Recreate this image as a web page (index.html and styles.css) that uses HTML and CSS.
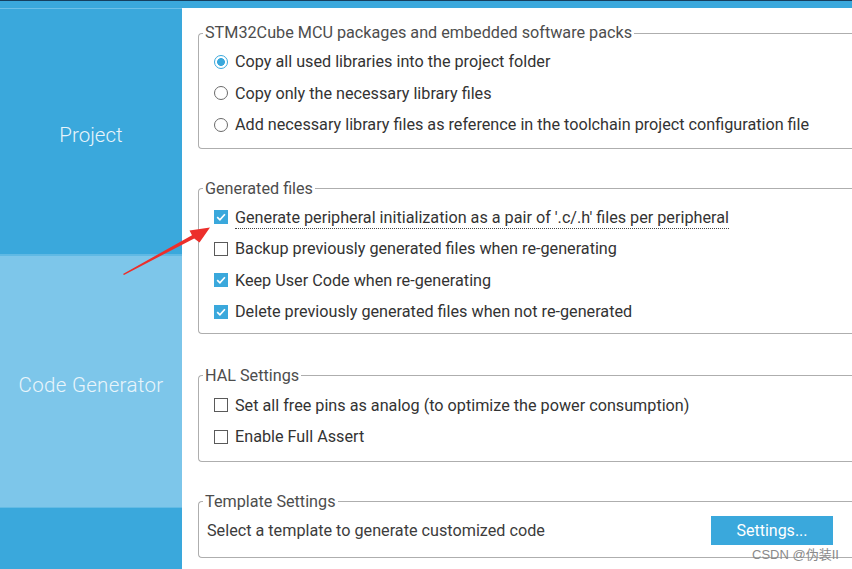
FILE: index.html
```html
<!DOCTYPE html>
<html lang="en">
<head>
<meta charset="utf-8">
<title>Project Manager</title>
<link rel="stylesheet" href="styles.css">
</head>
<body>
<div class="topbar"></div>
<div class="main">
  <nav class="sidebar">
    <div class="tab tab-project">Project</div>
    <div class="tab tab-active">Code Generator</div>
    <div class="tab tab-rest"></div>
  </nav>
  <section class="content">
    <fieldset class="group g1">
      <legend>STM32Cube MCU packages and embedded software packs</legend>
      <div class="opt"><span class="radio on"></span><span>Copy all used libraries into the project folder</span></div>
      <div class="opt"><span class="radio"></span><span>Copy only the necessary library files</span></div>
      <div class="opt"><span class="radio"></span><span>Add necessary library files as reference in the toolchain project configuration file</span></div>
    </fieldset>
    <fieldset class="group g2">
      <legend>Generated files</legend>
      <div class="opt"><span class="check on"></span><span class="focus">Generate peripheral initialization as a pair of '.c/.h' files per peripheral</span></div>
      <div class="opt"><span class="check"></span><span>Backup previously generated files when re-generating</span></div>
      <div class="opt"><span class="check on"></span><span>Keep User Code when re-generating</span></div>
      <div class="opt"><span class="check on"></span><span>Delete previously generated files when not re-generated</span></div>
    </fieldset>
    <fieldset class="group g3">
      <legend>HAL Settings</legend>
      <div class="opt"><span class="check"></span><span>Set all free pins as analog (to optimize the power consumption)</span></div>
      <div class="opt"><span class="check"></span><span>Enable Full Assert</span></div>
    </fieldset>
    <fieldset class="group g4">
      <legend>Template Settings</legend>
      <div class="tpl-row">
        <span class="tpl-text">Select a template to generate customized code</span>
        <button class="btn">Settings...</button>
      </div>
    </fieldset>
  </section>
</div>
<svg class="arrow" width="852" height="569" viewBox="0 0 852 569">
  <polygon points="123,274 192,235.2 189.5,230.5 210,227.5 199.5,242.5 194.2,238.4 124,275" fill="#ec2f2b"/>
</svg>
<div class="watermark">CSDN @伪装II</div>
</body>
</html>
```
FILE: styles.css
```css
html, body {
  margin: 0;
  padding: 0;
  width: 852px;
  height: 569px;
  overflow: hidden;
  background: #ffffff;
  font-family: Roboto, "Liberation Sans", "Noto Sans CJK SC", sans-serif;
  position: relative;
}
.topbar {
  height: 8px;
  background: #3aa8dc;
  border-top: 1px solid #163f5e;
  box-sizing: border-box;
}
.main {
  display: flex;
  height: 561px;
}
.sidebar {
  width: 182px;
  flex: none;
  display: flex;
  flex-direction: column;
  background: #3aa8dc;
  border-top: 1px solid #6cc0e8;
}
.tab {
  display: flex;
  align-items: center;
  justify-content: center;
  box-sizing: border-box;
  padding-top: 6px;
  color: #e9f5fb;
  font-size: 20.5px;
  font-weight: 300;
}
.tab-project {
  height: 247px;
  background: #3aa8dc;
  border-bottom: 2px solid #5fb9e4;
}
.tab-active {
  height: 252px;
  background: #7dc6ea;
  border-bottom: 1px solid #63bbe5;
  letter-spacing: 0.3px;
}
.tab-rest {
  flex: 1;
}
.content {
  flex: 1;
  overflow: hidden;
  padding: 16px 0 0 16px;
  color: #333333;
  font-size: 16.2px;
}
.group {
  width: 720px;
  margin: 0;
  padding: 4px 0 7px 15px;
  border: 1px solid #aeaeae;
  border-right: none;
  border-radius: 4px 0 0 4px;
  min-width: 0;
}
.group legend {
  padding: 0 2px;
  margin-left: -11px;
  line-height: 18px;
  color: #4d4d4d;
}
.g2 { margin-top: 31px; padding-bottom: 5px; }
.g3 { margin-top: 33px; padding-top: 5px; padding-bottom: 8px; }
.g4 { margin-top: 31px; padding-top: 0; padding-left: 8px; }
.g4 legend { margin-left: -4px; }
.opt {
  display: flex;
  align-items: center;
  gap: 7px;
  height: 31.5px;
  white-space: nowrap;
}
.radio, .check {
  flex: none;
  width: 14px;
  height: 14px;
  box-sizing: border-box;
  background: #ffffff;
}
.radio {
  border-radius: 50%;
  border: 1px solid #6a6a6a;
}
.radio.on {
  border-color: #3aa8dc;
  background: radial-gradient(circle, #3aa8dc 0 3.6px, #ffffff 4.2px);
}
.check {
  border: 1px solid #5a5a5a;
}
.check.on {
  border: none;
  background: #3aa8dc url("data:image/svg+xml,%3Csvg xmlns='http://www.w3.org/2000/svg' width='14' height='14'%3E%3Cpath d='M3.2 7.2 L5.9 9.8 L10.9 4.3' fill='none' stroke='white' stroke-width='1.7'/%3E%3C/svg%3E") no-repeat center;
}
.focus {
  border-bottom: 1px dotted #444444;
  padding-bottom: 1px;
  margin-bottom: -2px;
}
.tpl-row {
  display: flex;
  align-items: center;
  height: 38px;
  margin-top: 1px;
}
.tpl-text {
  width: 504px;
  flex: none;
  color: #3c3c3c;
}
.btn {
  width: 122px;
  height: 29px;
  border: none;
  background: #3aa8dc;
  color: #ffffff;
  font-family: inherit;
  font-size: 16px;
  padding: 0;
}
.arrow {
  position: absolute;
  left: 0;
  top: 0;
  pointer-events: none;
}
.watermark {
  position: absolute;
  left: 752px;
  top: 544px;
  font-size: 13px;
  color: #8a8a8a;
  font-family: "Liberation Sans", "Noto Sans CJK SC", sans-serif;
}
```
